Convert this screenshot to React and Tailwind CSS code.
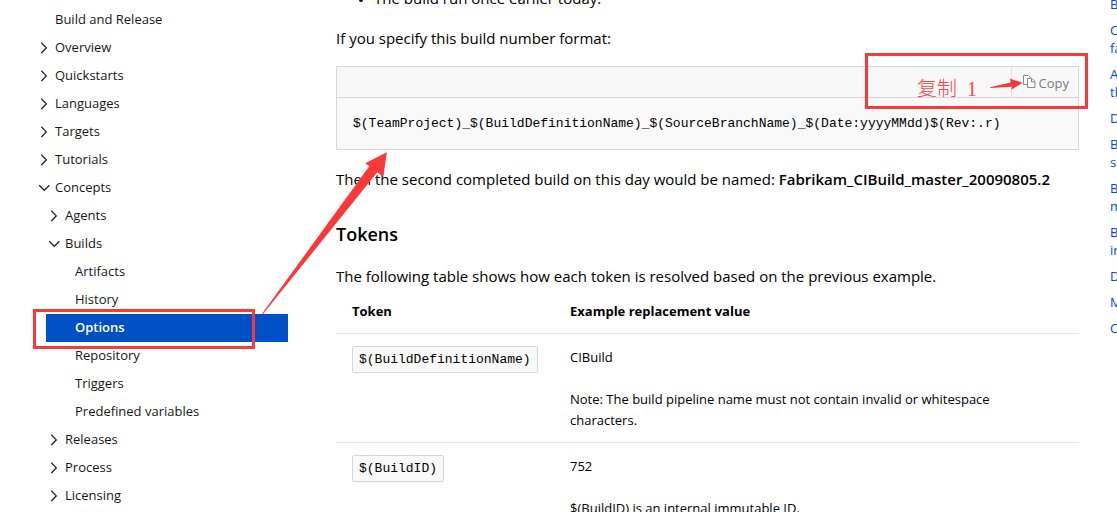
const navItems = [
  { label: 'Build and Release', level: 0 },
  { label: 'Overview', level: 0, state: 'closed' },
  { label: 'Quickstarts', level: 0, state: 'closed' },
  { label: 'Languages', level: 0, state: 'closed' },
  { label: 'Targets', level: 0, state: 'closed' },
  { label: 'Tutorials', level: 0, state: 'closed' },
  { label: 'Concepts', level: 0, state: 'open' },
  { label: 'Agents', level: 1, state: 'closed' },
  { label: 'Builds', level: 1, state: 'open' },
  { label: 'Artifacts', level: 2 },
  { label: 'History', level: 2 },
  { label: 'Options', level: 2, active: true },
  { label: 'Repository', level: 2 },
  { label: 'Triggers', level: 2 },
  { label: 'Predefined variables', level: 2 },
  { label: 'Releases', level: 1, state: 'closed' },
  { label: 'Process', level: 1, state: 'closed' },
  { label: 'Licensing', level: 1, state: 'closed' },
];

const indents = ['pl-[37px]', 'pl-[47px]', 'pl-[57px]'];

const tocItems = [['B'], ['C', 'fa'], ['A', 'th'], ['D'], ['B', 'se'], ['B', 'm'], ['B', 'in'], ['D'], ['M'], ['C']];

const tokens = [
  { name: '$(BuildDefinitionName)', value: 'CIBuild', note: 'Note: The build pipeline name must not contain invalid or whitespace characters.' },
  { name: '$(BuildID)', value: '752', note: '$(BuildID) is an internal immutable ID.' },
];

function Chevron({ state }) {
  return (
    <svg className="h-3.5 w-3.5 shrink-0" viewBox="0 0 14 14" fill="none" stroke="#222" strokeWidth="1.3" aria-hidden="true">
      {state === 'closed' && <path d="M4.3 2.8 9.3 7.900 4.3 13" />}
      {state === 'open' && <path d="M2.2 5.300 7.3 10.300 12.4 5.300" />}
    </svg>
  );
}

function NavItem({ item }) {
  if (item.active) {
    return (
      <li className="relative pl-[46px]">
        <a href="#options" aria-current="page" className="block bg-[#0050c5] pb-0.5 pl-[29px] leading-[26px] font-semibold text-white">
          {item.label}
        </a>
        <span className="absolute -top-[5px] left-[33px] h-10 w-[222px] border-3 border-[#fb3838]" />
      </li>
    );
  }
  return (
    <li>
      <a href="#topic" className={`flex items-center gap-1 pb-0.5 leading-[26px] ${indents[item.level]}`}>
        <Chevron state={item.state} />
        {item.label}
      </a>
    </li>
  );
}

function CopyIcon() {
  return (
    <svg className="-mt-1 h-[13px] w-[13px]" viewBox="0 0 13 13" fill="none" stroke="#8a8a8a" aria-hidden="true">
      <path d="M4 9.5H.5v-9h5L8 3" />
      <path d="M4.500 3.500h4.500l3 3v6h-7.500z" fill="#f8f8f8" />
      <path d="M8.500 3.500v3.500h3.500" />
    </svg>
  );
}

export default function App() {
  return (
    <div className="relative flex h-screen overflow-hidden bg-white font-['Open_Sans','Noto_Sans',sans-serif] text-black">
      <nav aria-label="Contents" className="w-72 shrink-0 pt-1.5 text-[13px] text-[#171717]">
        <ul>
          {navItems.map((item) => (
            <NavItem key={item.label} item={item} />
          ))}
        </ul>
      </nav>

      <main className="-mt-3.5 ml-12 min-w-0 flex-1 text-[15px] leading-6">
        <ul className="list-disc pl-[38px] marker:text-[11px]">
          <li>The build run once earlier today.</li>
        </ul>
        <p className="mt-4">If you specify this build number format:</p>

        <div className="relative mt-4 border border-[#d8d8d8] bg-[#f9f9f9]">
          <div className="flex h-[31px] justify-end border-b border-[#d3d6db] bg-[#f8f8f8]">
            <button type="button" className="flex items-center gap-[3px] border-l border-[#e0e0e0] pt-0.5 pr-[9px] pl-[11px] text-[13px] text-[#7a7a7a]">
              <CopyIcon />
              Copy
            </button>
          </div>
          <pre className="px-4 py-[15px] font-['Liberation_Mono',monospace] text-[13px] leading-[21px]">
            <code>$(TeamProject)_$(BuildDefinitionName)_$(SourceBranchName)_$(Date:yyyyMMdd)$(Rev:.r)</code>
          </pre>
          <span className="absolute -top-3.5 -right-2.5 h-14 w-[223px] border-3 border-[#fb3838]" />
          <span className="absolute top-2.5 right-[101px] font-['Liberation_Serif','Noto_Sans_CJK_SC',serif] text-xl leading-6 font-light whitespace-pre text-[#ff4545]">
            {'复制  1'}
          </span>
          <svg className="absolute top-[11px] right-[55px] h-3 w-[33px]" viewBox="0 0 33 12" fill="#fb3838" aria-hidden="true">
            <path d="M0 9.300 20.700 4.500 20 .7 32.700 4.700 21.300 11.700 21.700 8.700.7 9.900Z" />
          </svg>
        </div>

        <p className="mt-[17px]">
          Then the second completed build on this day would be named:{' '}
          <strong className="font-semibold">Fabrikam_CIBuild_master_20090805.2</strong>
        </p>
        <h3 className="mt-[31px] text-lg leading-6 font-semibold">Tokens</h3>
        <p className="mt-[18px]">The following table shows how each token is resolved based on the previous example.</p>

        <table className="w-full border-collapse text-left text-[13px] leading-[21px]">
          <thead>
            <tr className="border-b border-[#e3e3e3]">
              <th className="w-[218px] px-4 pt-[13px] pb-[11px] font-bold">Token</th>
              <th className="px-4 pt-[13px] pb-[11px] font-bold">Example replacement value</th>
            </tr>
          </thead>
          <tbody>
            {tokens.map((token) => (
              <tr key={token.name} className="border-b border-[#e3e3e3] align-top">
                <td className="px-4 py-3">
                  <code className="inline-block rounded-xs border border-[#d3d6db] bg-[#f9f9f9] px-[6px] font-['Liberation_Mono',monospace] leading-[25px]">
                    {token.name}
                  </code>
                </td>
                <td className="px-4 pt-[13px] pb-[11px]">
                  <p>{token.value}</p>
                  <p className="mt-[21px] max-w-[440px]">{token.note}</p>
                </td>
              </tr>
            ))}
          </tbody>
        </table>
      </main>

      <aside aria-label="In this article" className="-mt-[5px] ml-[31px] w-[7px] shrink-0 overflow-hidden text-[13px] leading-[18px] text-[#0050c5]">
        <ul className="flex flex-col gap-2">
          {tocItems.map((lines, index) => (
            <li key={index}>
              <a href="#section" className="block">
                {lines.map((line) => (
                  <span key={line} className="block">{line}</span>
                ))}
              </a>
            </li>
          ))}
        </ul>
      </aside>

      <svg className="pointer-events-none absolute top-[152px] left-[262px] h-[163px] w-[126px]" viewBox="262 152 126 163" fill="#fb3838" aria-hidden="true">
        <path d="M262 313.800 369.300 166.300 365.300 163.200 386.800 152.200 383.300 176.900 377.300 172.300 262.800 314.300Z" />
      </svg>
    </div>
  );
}
